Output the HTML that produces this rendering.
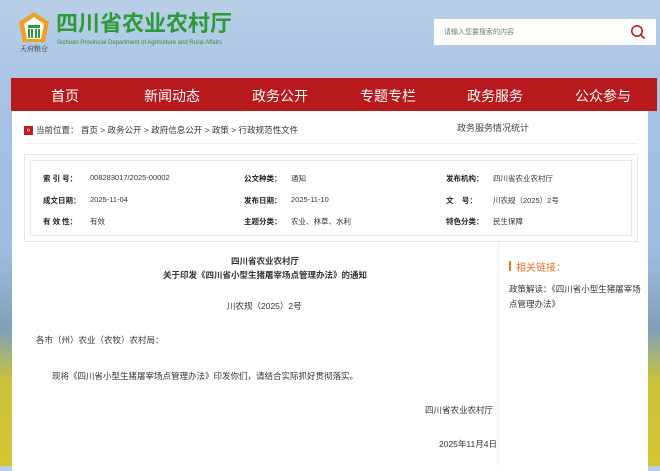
<!DOCTYPE html>
<html><head><meta charset="utf-8"><style>
*{margin:0;padding:0;box-sizing:border-box}
body{width:660px;height:466px;overflow:hidden;position:relative;font-family:"Liberation Sans","Noto Sans CJK SC",sans-serif;background:linear-gradient(180deg,#b9cfe6 0,#a6c3e4 100px,#9dbde0 250px,#7fa0b8 330px,#c9c23a 380px,#d7c533 466px);color:#333}
.abs{position:absolute}
.title{left:56px;top:11px;font-size:22px;font-weight:bold;color:#2d9a3a;line-height:26px;white-space:nowrap}
.sub{left:57px;top:40px;font-size:6px;color:#3a8a3a;white-space:nowrap}
.search{left:434px;top:19px;width:222px;height:26px;background:#fff}
.search span{position:absolute;left:10px;top:8px;font-size:7px;color:#777}
.nav{left:11px;top:78px;width:646px;height:33px;background:#b7191d}
.nav div{position:absolute;top:8px;font-size:14px;color:#fff}
.main{left:12px;top:111px;width:636px;height:360px;background:#fff}
.crumb{left:24px;top:124px;font-size:8.5px;color:#333}
.ico{left:24px;top:126px;width:9px;height:9px;background:#c41a1d;color:#fff;font-size:7px;line-height:9px;text-align:center}
.info{left:24px;top:154px;width:614px;height:88px;border:1px solid #e6e6e6}
.info2{left:30px;top:160px;width:602px;height:76px;border:1px solid #e6e6e6}
.t{font-size:7.5px;white-space:nowrap}
.b{font-weight:bold;color:#222}
.c{font-size:8.5px;white-space:nowrap;color:#333}
</style></head><body>
<svg class="abs" style="left:17px;top:10px" width="34" height="42" viewBox="0 0 34 42"><path d="M17 2 L32 12 L28 32 L6 32 L2 12 Z" fill="#f0a020"/><path d="M17 7 L27 14 L24 29 L10 29 L7 14Z" fill="#fff"/><rect x="11" y="15" width="12" height="3" fill="#2d9a3a"/><path d="M12 19v9M15 19v9M19 19v9M22 19v9" stroke="#2d9a3a" stroke-width="2"/><text x="17" y="41" font-size="7" text-anchor="middle" fill="#333" font-family="Noto Serif CJK SC,serif">天府粮仓</text></svg>
<div class="abs title">四川省农业农村厅</div>
<div class="abs sub">Sichuan Provincial Department of Agriculture and Rural Affairs</div>
<div class="abs search"><span>请输入您要搜索的内容</span>
<svg class="abs" style="left:196px;top:5px" width="16" height="16" viewBox="0 0 16 16"><circle cx="7" cy="7" r="5.2" fill="none" stroke="#c41a1d" stroke-width="1.6"/><path d="M11 11l3.5 3.5" stroke="#c41a1d" stroke-width="1.6"/></svg></div>
<div class="abs nav">
<div style="left:40px">首页</div><div style="left:133px">新闻动态</div><div style="left:241px">政务公开</div><div style="left:349px">专题专栏</div><div style="left:456px">政务服务</div><div style="left:564px">公众参与</div></div>
<div class="abs main"></div>
<div class="abs ico">»</div>
<div class="abs crumb" style="left:36px">当前位置：&nbsp;首页 &gt; 政务公开 &gt; 政府信息公开 &gt; 政策 &gt; 行政规范性文件</div>
<div class="abs crumb" style="left:457px;top:121px;font-size:9px;color:#444">政务服务情况统计</div>
<div class="abs" style="left:24px;top:143px;width:614px;height:1px;background:#eee"></div>
<div class="abs info"></div><div class="abs info2"></div>
<div class="abs t b" style="left:43px;top:173px">索 引 号：</div><div class="abs t" style="left:90px;top:173px">008283017/2025-00002</div>
<div class="abs t b" style="left:244px;top:173px">公文种类：</div><div class="abs t" style="left:291px;top:173px">通知</div>
<div class="abs t b" style="left:446px;top:173px">发布机构：</div><div class="abs t" style="left:493px;top:173px">四川省农业农村厅</div>
<div class="abs t b" style="left:43px;top:195px">成文日期：</div><div class="abs t" style="left:90px;top:195px">2025-11-04</div>
<div class="abs t b" style="left:244px;top:195px">发布日期：</div><div class="abs t" style="left:291px;top:195px">2025-11-10</div>
<div class="abs t b" style="left:446px;top:195px">文&nbsp;&nbsp;&nbsp;&nbsp;号：</div><div class="abs t" style="left:493px;top:195px">川农规（2025）2号</div>
<div class="abs t b" style="left:43px;top:216px">有 效 性：</div><div class="abs t" style="left:90px;top:216px">有效</div>
<div class="abs t b" style="left:244px;top:216px">主题分类：</div><div class="abs t" style="left:291px;top:216px">农业、林草、水利</div>
<div class="abs t b" style="left:446px;top:216px">特色分类：</div><div class="abs t" style="left:493px;top:216px">民生保障</div>
<div class="abs" style="left:498px;top:242px;width:1px;height:224px;background:#eee"></div>
<div class="abs c b" style="left:231px;top:255px">四川省农业农村厅</div>
<div class="abs c b" style="left:163px;top:269px">关于印发《四川省小型生猪屠宰场点管理办法》的通知</div>
<div class="abs c" style="left:227px;top:300px">川农规（2025）2号</div>
<div class="abs c" style="left:36px;top:334px">各市（州）农业（农牧）农村局：</div>
<div class="abs c" style="left:52px;top:370px">现将《四川省小型生猪屠宰场点管理办法》印发你们，请结合实际抓好贯彻落实。</div>
<div class="abs c" style="left:425px;top:404px">四川省农业农村厅</div>
<div class="abs c" style="left:439px;top:438px">2025年11月4日</div>
<div class="abs" style="left:509px;top:261px;width:2px;height:10px;background:#e8732a"></div>
<div class="abs" style="left:516px;top:259px;font-size:10px;color:#e8732a">相关链接：</div>
<div class="abs c" style="left:509px;top:282px;line-height:15px;width:135px;white-space:normal">政策解读：《四川省小型生猪屠宰场点管理办法》</div>
</body></html>
